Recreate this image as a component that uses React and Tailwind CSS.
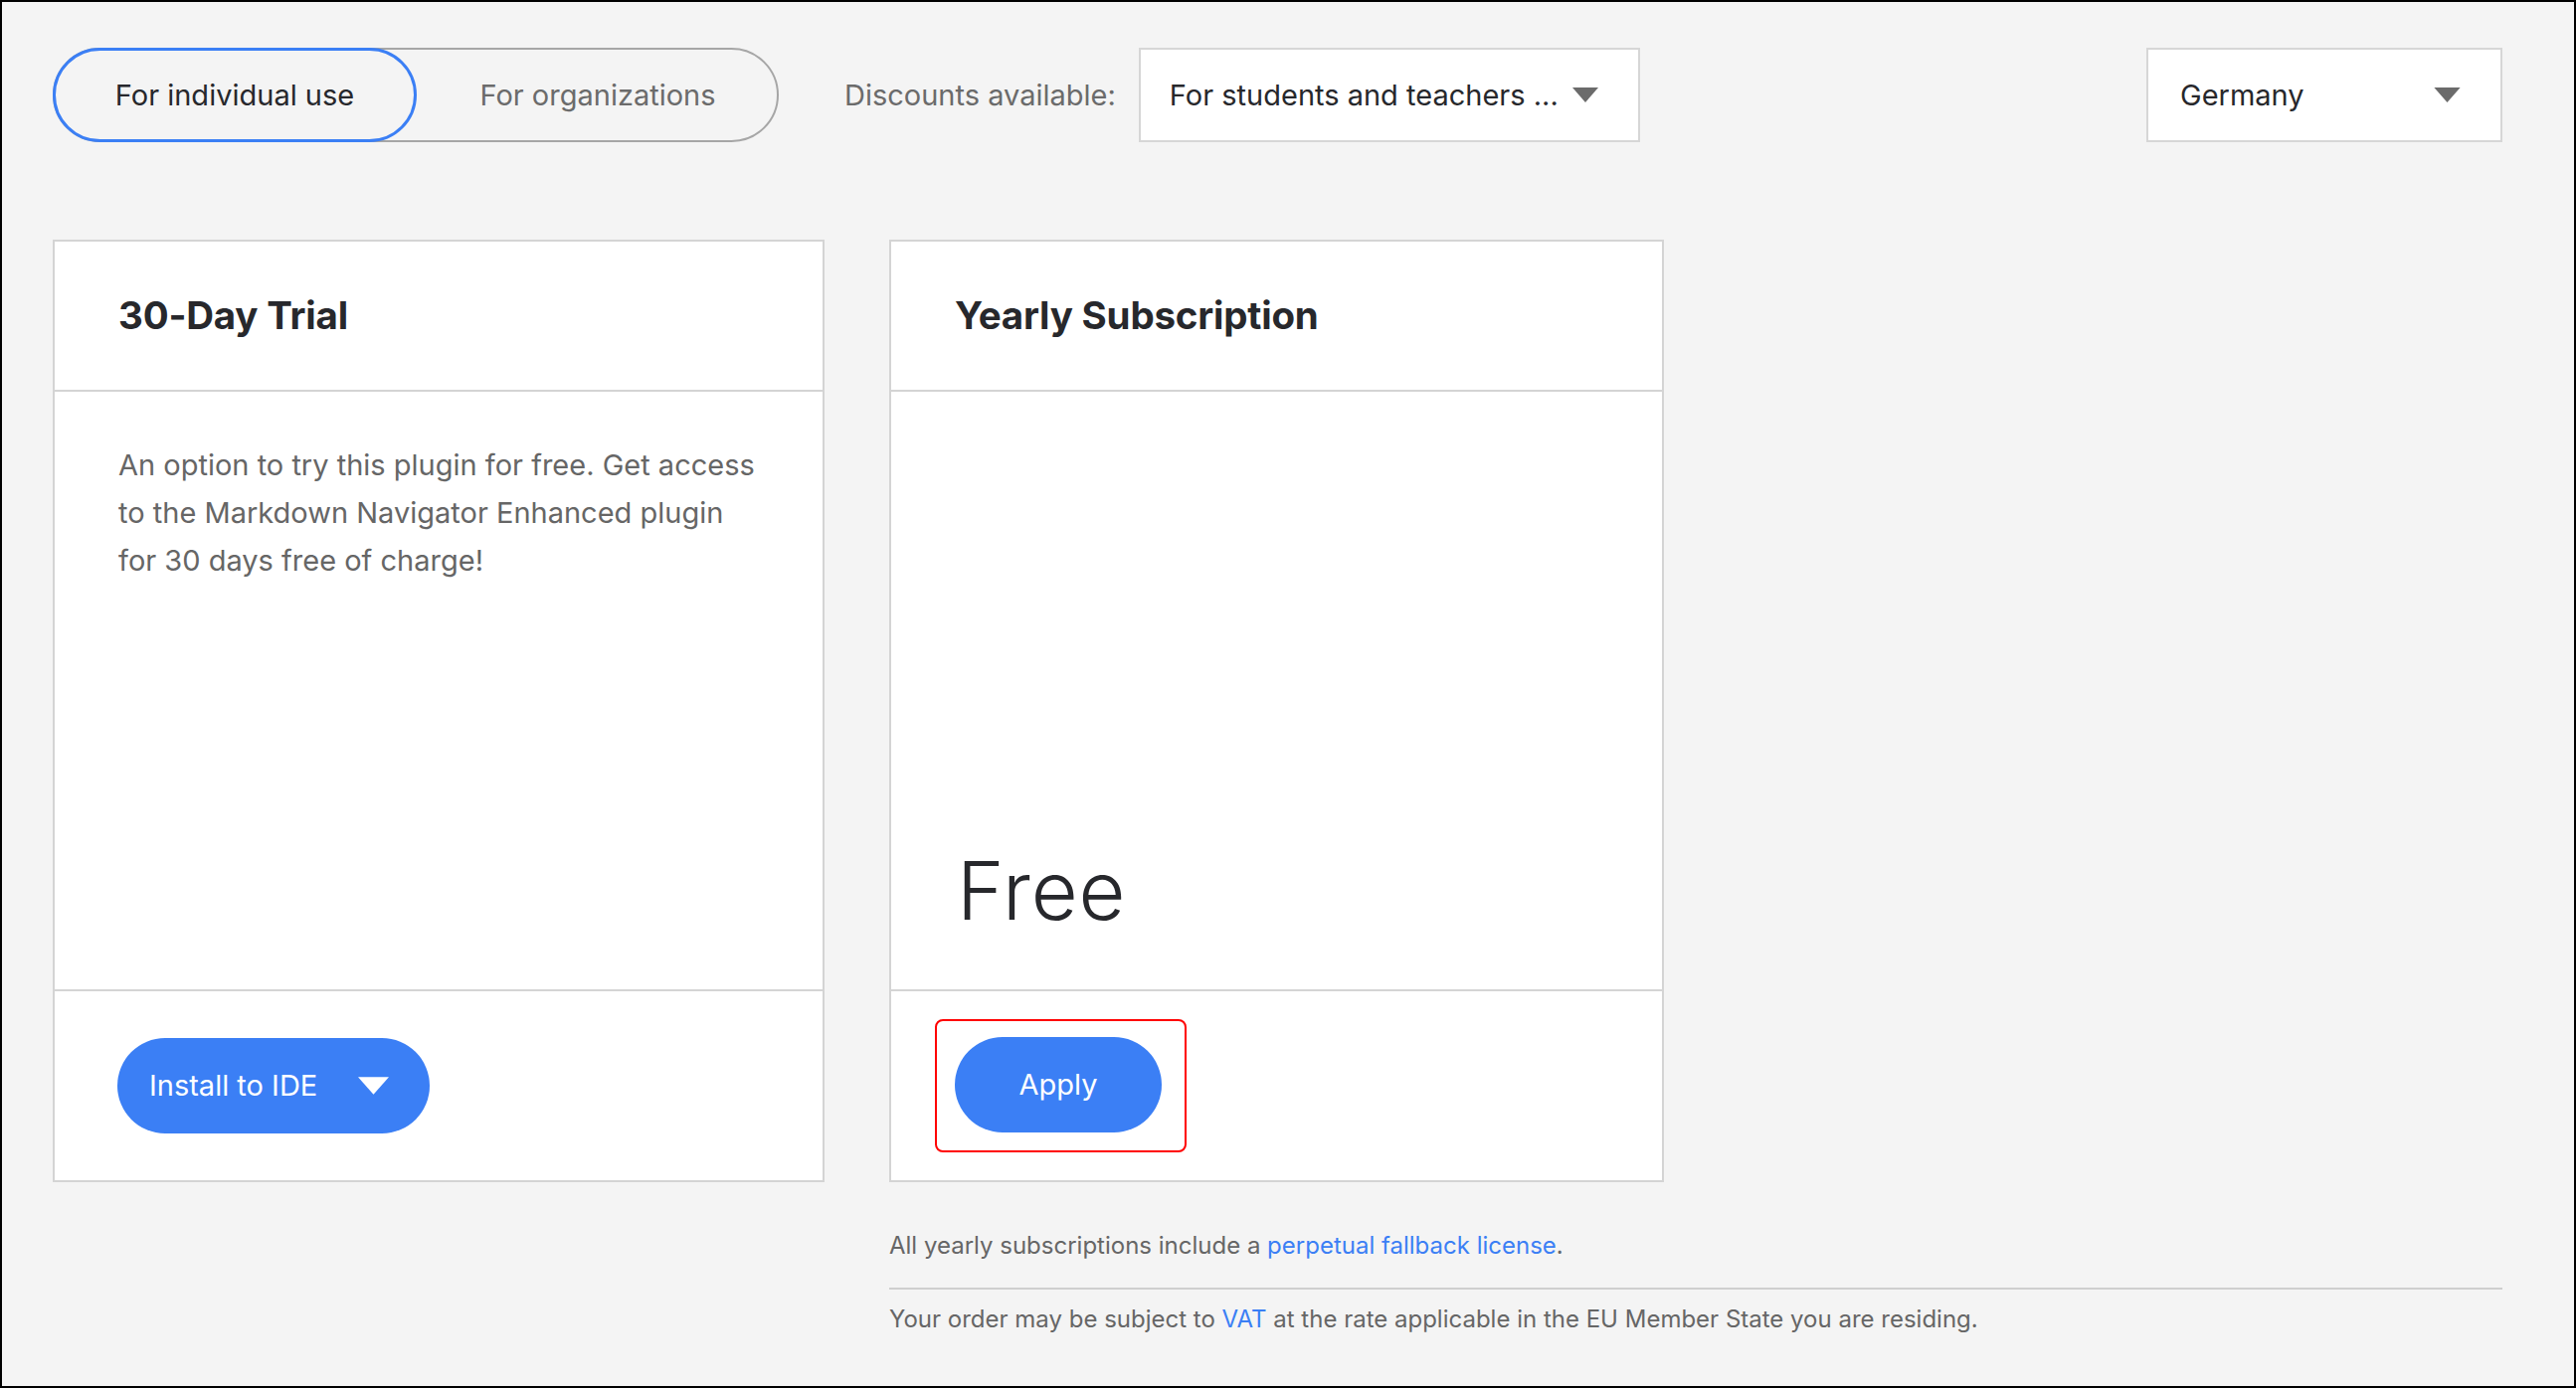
import { useState } from 'react';

function Caret({ className = '', color = '#6b6b6b' }) {
  return (
    <svg className={className} viewBox="0 0 28 16" aria-hidden="true">
      <polygon points="0,0 28,0 14,16" fill={color} />
    </svg>
  );
}

function PlanCard({ title, children, footer, wide }) {
  return (
    <div className={`${wide ? 'w-[779px]' : 'w-[776px]'} h-[948px] flex flex-col bg-white border-2 border-[#d4d4d4]`}>
      <div className="h-[151px] shrink-0 flex items-center px-[64px] border-b-2 border-[#d4d4d4]">
        <h2 className="text-[38.5px] font-bold text-[#27282c] tracking-[-0.2px]">{title}</h2>
      </div>
      <div className="flex-1 flex flex-col">{children}</div>
      <div className="h-[192px] shrink-0 flex items-center border-t-2 border-[#d4d4d4]">{footer}</div>
    </div>
  );
}

export default function App() {
  const [mode, setMode] = useState('individual');

  return (
    <div
      className="w-full h-screen border-2 border-black bg-[#f4f4f4] overflow-hidden"
      style={{ fontFamily: 'Inter, "Noto Sans", "Liberation Sans", sans-serif' }}
    >
      <div className="pl-[51px] pr-[72px] pt-[46px]">
        {/* top controls */}
        <div className="flex items-center h-[95px]">
          <div className="w-[730px] h-[95px] rounded-full border-2 border-[#a6a6a6] flex">
            <button
              onClick={() => setMode('individual')}
              className={`w-[366px] h-[95px] -my-[2px] -ml-[2px] rounded-full text-[29px] ${
                mode === 'individual' ? 'border-[3px] border-[#3b7ff5] text-[#27282c]' : 'text-[#6b6b6b]'
              }`}
            >
              For individual use
            </button>
            <button
              onClick={() => setMode('org')}
              className={`flex-1 h-[95px] -my-[2px] -mr-[2px] rounded-full text-[29px] ${
                mode === 'org' ? 'border-[3px] border-[#3b7ff5] text-[#27282c]' : 'text-[#6b6b6b]'
              }`}
            >
              For organizations
            </button>
          </div>

          <span className="ml-[66px] text-[29px] text-[#6b6b6b]">Discounts available:</span>

          <div className="ml-[23px] w-[504px] h-[95px] bg-white border-2 border-[#d6d6d6] flex items-center pl-[29px] pr-[40px]">
            <span className="flex-1 text-[29px] text-[#27282c] whitespace-nowrap">For students and teachers ...</span>
            <Caret className="w-[26px] h-[15px]" />
          </div>

          <div className="ml-auto w-[358px] h-[95px] bg-white border-2 border-[#d6d6d6] flex items-center pl-[32px] pr-[40px]">
            <span className="flex-1 text-[29px] text-[#27282c]">Germany</span>
            <Caret className="w-[27px] h-[15px]" />
          </div>
        </div>

        {/* plans */}
        <div className="mt-[98px] flex gap-[65px]">
          <PlanCard
            title="30-Day Trial"
            footer={
              <button className="ml-[63px] w-[314px] h-[96px] rounded-full bg-[#3b7ff5] text-white text-[29px] flex items-center pl-[32px] pr-[41px]">
                <span className="flex-1 text-left">Install to IDE</span>
                <Caret className="w-[31px] h-[18px]" color="#ffffff" />
              </button>
            }
          >
            <p className="mt-[50px] ml-[64px] w-[648px] text-[29px] leading-[48px] text-[#666666]">
              An option to try this plugin for free. Get access to the Markdown Navigator Enhanced plugin for 30 days free of charge!
            </p>
          </PlanCard>

          <PlanCard
            title="Yearly Subscription"
            wide
            footer={
              <div className="ml-[44px] border-2 border-[#ff0000] rounded-[8px] pt-[16px] pb-[18px] pl-[18px] pr-[23px]">
                <button className="w-[208px] h-[96px] rounded-full bg-[#3b7ff5] text-white text-[29px]">Apply</button>
              </div>
            }
          >
            <div className="flex-1" />
            <div className="px-[66px] pb-[58px] text-[81px] leading-none font-light tracking-[1px] text-[#27282c]">Free</div>
          </PlanCard>
        </div>

        {/* notes */}
        <div className="ml-[841px] mt-[47px] text-[24px] leading-[34px] text-[#666666]">
          <p>
            All yearly subscriptions include a{' '}
            <a href="#" className="text-[#3b7ff5]">perpetual fallback license</a>.
          </p>
          <div className="mt-[25px] h-[2px] bg-[#cfcfcf]" />
          <p className="mt-[13px]">
            Your order may be subject to <a href="#" className="text-[#3b7ff5]">VAT</a> at the rate applicable in the EU Member State you are residing.
          </p>
        </div>
      </div>
    </div>
  );
}
